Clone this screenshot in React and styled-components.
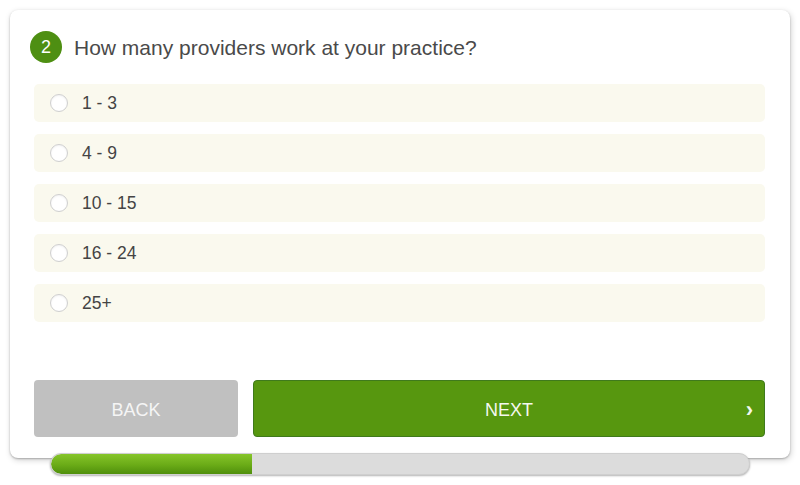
import React, { useState } from "react";
import styled, { createGlobalStyle } from "styled-components";

const GlobalStyle = createGlobalStyle`
    html, body {
        margin: 0;
        padding: 0;
        background: #fff;
        font-family: "Liberation Sans", Arial, sans-serif;
    }
`

const Page = styled.div`
    width: 800px;
    height: 485px;
    padding: 10px 10px 0;
    box-sizing: border-box;
    display: flex;
    flex-direction: column;
`

const Card = styled.div`
    height: 448px;
    box-sizing: border-box;
    background: #fff;
    border-radius: 8px;
    box-shadow: 0 1px 2px rgba(0,0,0,0.25), 1px 2px 6px rgba(0,0,0,0.18);
    padding: 21px 25px 21px 20px;
    display: flex;
    flex-direction: column;
`

const Header = styled.div`
    display: flex;
    align-items: center;
    gap: 12px;
    height: 32px;
`

const Badge = styled.div`
    width: 32px;
    height: 32px;
    border-radius: 50%;
    background: #4e8f12;
    color: #fff;
    font-size: 18px;
    display: flex;
    align-items: center;
    justify-content: center;
`

const Question = styled.h2`
    margin: 2px 0 0;
    font-size: 21px;
    font-weight: normal;
    color: #4a4a4a;
`

const Options = styled.div`
    display: flex;
    flex-direction: column;
    gap: 12px;
    margin: 21px 0 0 4px;
`

const Option = styled.label`
    height: 38px;
    display: flex;
    align-items: center;
    padding-left: 16px;
    background: ${p => (p.$checked ? "#f2f5e4" : "#faf9ee")};
    border-radius: 5px;
    cursor: pointer;
    font-size: 17.5px;
    color: #444;
`

const Radio = styled.span`
    width: 18px;
    height: 18px;
    box-sizing: border-box;
    border-radius: 50%;
    border: 1px solid #cfcfcf;
    background: #fff;
    box-shadow: inset 0 1px 2px rgba(0,0,0,0.06);
    margin-right: 14px;
    display: flex;
    align-items: center;
    justify-content: center;

    &::after {
        content: "";
        width: 9px;
        height: 9px;
        border-radius: 50%;
        background: ${p => (p.$checked ? "#4e8f12" : "transparent")};
    }
`

const Actions = styled.div`
    margin: auto 0 0 4px;
    display: flex;
    gap: 15px;
`

const Button = styled.button`
    height: 57px;
    padding-top: 4px;
    border-radius: 4px;
    font-family: inherit;
    font-size: 18px;
    color: #f4f8ee;
    cursor: pointer;
    position: relative;
`

const BackButton = styled(Button)`
    width: 204px;
    background: #c0c0c0;
    border: none;
    color: #f5f5f5;
`

const NextButton = styled(Button)`
    flex: 1;
    background: #57970f;
    border: 1px solid #3f7a1c;
`

const Chevron = styled.span`
    position: absolute;
    right: 11px;
    top: 50%;
    transform: translateY(-45%);
    font-size: 22px;
    font-weight: bold;
`

const Track = styled.div`
    margin: -5px 40px 0 40px;
    height: 22px;
    border-radius: 11px;
    background: #dcdcdc;
    box-shadow: 0 1px 2px rgba(0,0,0,0.3);
    border: 1px solid #cfcfcf;
    box-sizing: border-box;
    overflow: hidden;
    position: relative;
`

const Fill = styled.div`
    height: 100%;
    background: linear-gradient(#86c52a, #6aab17 55%, #4f8f0c);
    border-radius: 11px 0 0 11px;
`

const choices = ["1 - 3", "4 - 9", "10 - 15", "16 - 24", "25+"];

export default function App() {
    const [picked, setPicked] = useState(null);
    const progress = 202 / 700;

    return (
        <>
            <GlobalStyle />
            <Page>
                <Card>
                    <Header>
                        <Badge>2</Badge>
                        <Question>How many providers work at your practice?</Question>
                    </Header>
                    <Options>
                        {choices.map(c => (
                            <Option key={c} $checked={picked === c} onClick={() => setPicked(c)}>
                                <Radio $checked={picked === c} />
                                {c}
                            </Option>
                        ))}
                    </Options>
                    <Actions>
                        <BackButton>BACK</BackButton>
                        <NextButton>
                            NEXT
                            <Chevron>›</Chevron>
                        </NextButton>
                    </Actions>
                </Card>
                <Track>
                    <Fill style={{ width: `${progress * 100}%` }} />
                </Track>
            </Page>
        </>
    );
}
